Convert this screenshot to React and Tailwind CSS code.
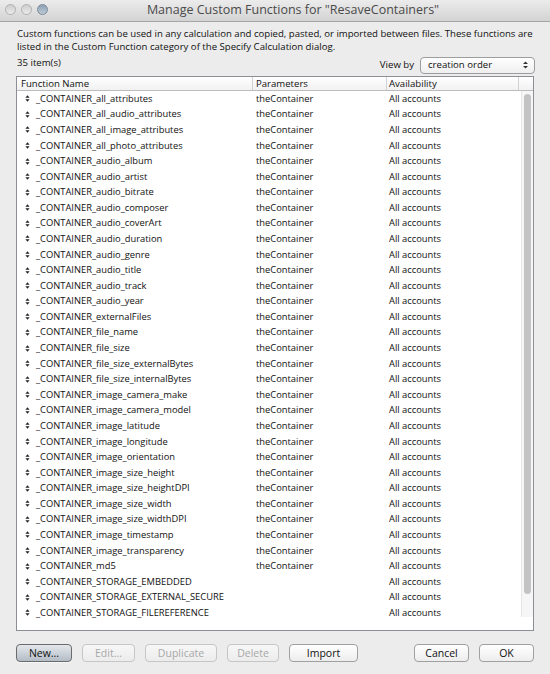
import React from 'react';

const functions = [
  ['_CONTAINER_all_attributes', 'theContainer'],
  ['_CONTAINER_all_audio_attributes', 'theContainer'],
  ['_CONTAINER_all_image_attributes', 'theContainer'],
  ['_CONTAINER_all_photo_attributes', 'theContainer'],
  ['_CONTAINER_audio_album', 'theContainer'],
  ['_CONTAINER_audio_artist', 'theContainer'],
  ['_CONTAINER_audio_bitrate', 'theContainer'],
  ['_CONTAINER_audio_composer', 'theContainer'],
  ['_CONTAINER_audio_coverArt', 'theContainer'],
  ['_CONTAINER_audio_duration', 'theContainer'],
  ['_CONTAINER_audio_genre', 'theContainer'],
  ['_CONTAINER_audio_title', 'theContainer'],
  ['_CONTAINER_audio_track', 'theContainer'],
  ['_CONTAINER_audio_year', 'theContainer'],
  ['_CONTAINER_externalFiles', 'theContainer'],
  ['_CONTAINER_file_name', 'theContainer'],
  ['_CONTAINER_file_size', 'theContainer'],
  ['_CONTAINER_file_size_externalBytes', 'theContainer'],
  ['_CONTAINER_file_size_internalBytes', 'theContainer'],
  ['_CONTAINER_image_camera_make', 'theContainer'],
  ['_CONTAINER_image_camera_model', 'theContainer'],
  ['_CONTAINER_image_latitude', 'theContainer'],
  ['_CONTAINER_image_longitude', 'theContainer'],
  ['_CONTAINER_image_orientation', 'theContainer'],
  ['_CONTAINER_image_size_height', 'theContainer'],
  ['_CONTAINER_image_size_heightDPI', 'theContainer'],
  ['_CONTAINER_image_size_width', 'theContainer'],
  ['_CONTAINER_image_size_widthDPI', 'theContainer'],
  ['_CONTAINER_image_timestamp', 'theContainer'],
  ['_CONTAINER_image_transparency', 'theContainer'],
  ['_CONTAINER_md5', 'theContainer'],
  ['_CONTAINER_STORAGE_EMBEDDED', ''],
  ['_CONTAINER_STORAGE_EXTERNAL_SECURE', ''],
  ['_CONTAINER_STORAGE_FILEREFERENCE', ''],
];

const SortHandle = () => (
  <svg width="5" height="7" viewBox="0 0 5 7" className="shrink-0">
    <path d="M2.5 0.3 L4.6 2.7 L0.4 2.7 Z" fill="#222" />
    <path d="M2.5 6.7 L4.6 4.3 L0.4 4.3 Z" fill="#222" />
  </svg>
);

const Light = ({ active }) => (
  <div
    className={
      active
        ? 'w-[11px] h-[11px] rounded-full border border-[#7a8b9b] bg-gradient-to-b from-[#8ea1b2] to-[#bccad6]'
        : 'w-[11px] h-[11px] rounded-full border border-[#b0b0b0] bg-gradient-to-b from-[#cdcdcd] to-[#ececec]'
    }
  />
);

const Button = ({ children, width, disabled, primary }) => {
  let cls =
    'h-[18px] rounded-[4px] border flex items-center justify-center text-[10.5px] leading-none shrink-0 ';
  if (primary) {
    cls += 'border-[#6b6b6b] bg-gradient-to-b from-[#e4e8ec] to-[#b4bcc6] text-[#111] shadow-[0_1px_0_rgba(255,255,255,0.6)]';
  } else if (disabled) {
    cls += 'border-[#c6c6c6] bg-gradient-to-b from-[#f7f7f7] to-[#ececec] text-[#a8a8a8]';
  } else {
    cls += 'border-[#a0a0a0] bg-gradient-to-b from-[#ffffff] to-[#ededed] text-[#111]';
  }
  return (
    <div className={cls} style={{ width }}>
      {children}
    </div>
  );
};

export default function App() {
  return (
    <div
      className="w-[550px] h-[674px] bg-[#ececec] flex flex-col overflow-hidden text-[#111]"
      style={{ fontFamily: '"Open Sans", "DejaVu Sans", sans-serif' }}
    >
      {/* title bar */}
      <div className="h-[22px] shrink-0 relative flex items-center justify-center pl-[36px] bg-gradient-to-b from-[#ececec] to-[#d3d3d3] border-b border-[#a6a6a6]">
        <div className="absolute left-[5px] top-[4px] flex gap-[5px]">
          <Light />
          <Light />
          <Light active />
        </div>
        <span className="text-[12.5px] text-[#4a4a4a]">
          Manage Custom Functions for "ResaveContainers"
        </span>
      </div>

      <div className="flex-1 flex flex-col px-[16px]">
        <p className="mt-[5px] text-[9.6px] leading-[13px] pl-[1px]">
          Custom functions can be used in any calculation and copied, pasted, or imported between files. These functions are
          listed in the Custom Function category of the Specify Calculation dialog.
        </p>

        <div className="mt-[3px] h-[18px] flex items-center text-[9.6px]">
          <span className="pl-[1px] -mt-[3px]">35 item(s)</span>
          <div className="flex-1" />
          <span className="mr-[6px]">View by</span>
          <div className="w-[115px] h-[17px] rounded-[4px] border border-[#9d9d9d] bg-gradient-to-b from-white to-[#efefef] flex items-center pl-[7px] pr-[6px] -mr-[1px]">
            <span className="flex-1">creation order</span>
            <svg width="5" height="8" viewBox="0 0 5 8">
              <path d="M2.5 0.5 L5 3 L0 3 Z" fill="#333" />
              <path d="M2.5 7.5 L5 5 L0 5 Z" fill="#333" />
            </svg>
          </div>
        </div>

        {/* list */}
        <div className="mt-[2px] h-[555px] border border-[#8c8f94] bg-white flex flex-col overflow-hidden">
          <div className="h-[14px] shrink-0 flex bg-gradient-to-b from-white to-[#f1f1f1] border-b border-[#bcbcbc] text-[9.6px] leading-[13px]">
            <div className="w-[236px] pl-[4px] border-r border-[#d2d2d2]">Function Name</div>
            <div className="w-[134px] pl-[3px] border-r border-[#d2d2d2]">Parameters</div>
            <div className="w-[132px] pl-[2px] border-r border-[#d2d2d2]">Availability</div>
            <div className="flex-1" />
          </div>
          <div className="flex-1 flex overflow-hidden">
            <div className="flex-1 flex flex-col overflow-hidden">
              <div className="h-[530px] overflow-hidden">
                {functions.map(([name, param]) => (
                  <div key={name} className="h-[15.58px] flex items-center text-[9.35px]">
                    <div className="w-[236px] flex items-center pl-[8px] gap-[6px]">
                      <SortHandle />
                      <span className="whitespace-nowrap">{name}</span>
                    </div>
                    <div className="w-[134px] pl-[3px] whitespace-nowrap">{param}</div>
                    <div className="w-[132px] pl-[2px] whitespace-nowrap">All accounts</div>
                  </div>
                ))}
              </div>
              <div className="flex-1" />
            </div>
            <div className="w-[12px] flex flex-col">
              <div className="h-[526px] bg-[#f6f6f6] border-l border-[#e6e6e6] pt-[3px] flex justify-center">
                <div className="w-[7px] h-[500px] rounded-full bg-[#c3c3c3]" />
              </div>
            </div>
          </div>
        </div>

        {/* buttons */}
        <div className="mt-[13px] flex items-center">
          <Button width={56} primary>New...</Button>
          <div className="w-[10px]" />
          <Button width={53} disabled>Edit...</Button>
          <div className="w-[10px]" />
          <Button width={72} disabled>Duplicate</Button>
          <div className="w-[10px]" />
          <Button width={52} disabled>Delete</Button>
          <div className="w-[10px]" />
          <Button width={69}>Import</Button>
          <div className="flex-1" />
          <Button width={55}>Cancel</Button>
          <div className="w-[10px]" />
          <Button width={55}>OK</Button>
        </div>
      </div>
    </div>
  );
}
